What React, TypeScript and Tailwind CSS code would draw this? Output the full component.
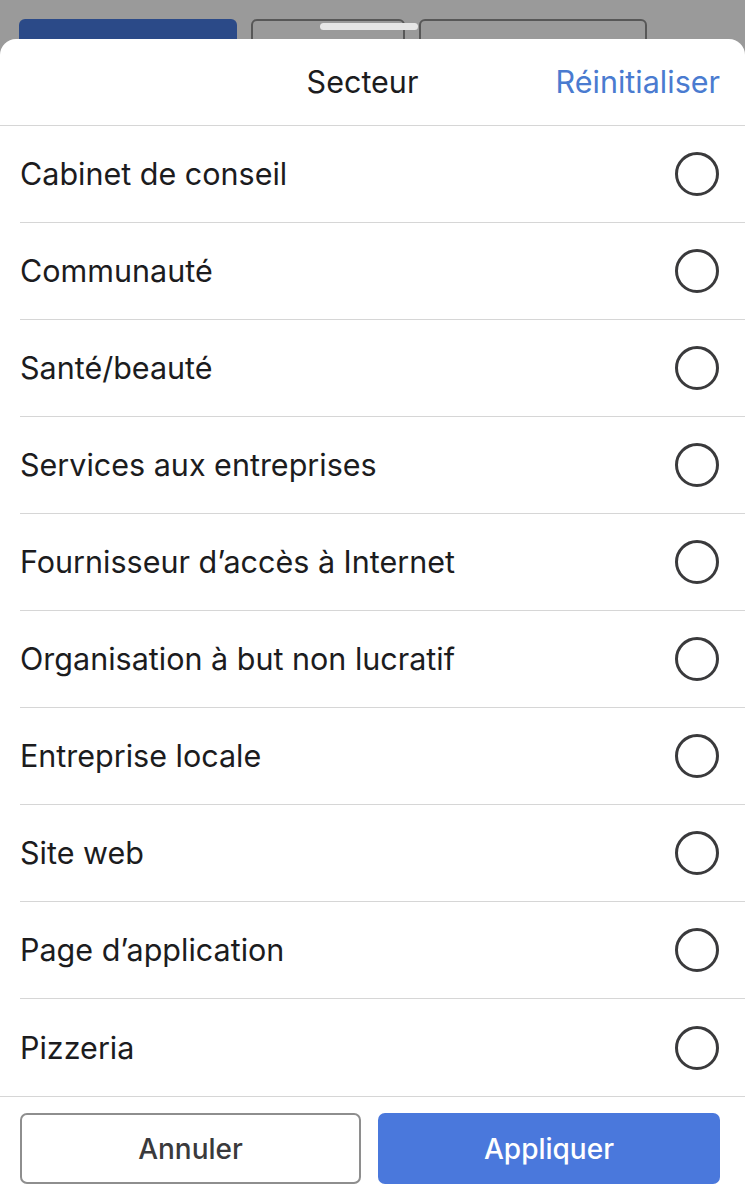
import { useState } from 'react'

const secteurs = [
  'Cabinet de conseil',
  'Communauté',
  'Santé/beauté',
  'Services aux entreprises',
  'Fournisseur d’accès à Internet',
  'Organisation à but non lucratif',
  'Entreprise locale',
  'Site web',
  'Page d’application',
  'Pizzeria',
]

export default function App() {
  const [selected, setSelected] = useState<string | null>(null)

  return (
    <div className="relative h-[1196px] w-[745px] overflow-hidden bg-[#9a9a9a] font-['Inter',sans-serif]">
      {/* Filtres en arrière-plan (assombris) */}
      <div className="flex gap-[14px] px-[19px] pt-[19px]">
        <div className="h-[40px] w-[218px] rounded-[6px] bg-[#2b4a88]" />
        <div className="h-[40px] w-[154px] rounded-[6px] border-2 border-[#575757]" />
        <div className="h-[40px] w-[228px] rounded-[6px] border-2 border-[#575757]" />
      </div>
      <div className="absolute left-[320px] top-[23px] h-[7px] w-[98px] rounded-full bg-[#e6e6e6]" />

      {/* Feuille */}
      <div className="absolute inset-x-0 bottom-0 top-[39px] flex flex-col rounded-t-[16px] bg-white">
        <div className="relative flex h-[87px] items-center justify-center border-b border-[#d6d6d6]">
          <span className="pr-[20px] text-[30.5px] text-[#1c1c1e]">Secteur</span>
          <button
            type="button"
            onClick={() => setSelected(null)}
            className="absolute right-[25px] text-[30.5px] text-[#4a7bd0]"
          >
            Réinitialiser
          </button>
        </div>

        <ul className="flex flex-col">
          {secteurs.map((s, i) => (
            <li
              key={s}
              onClick={() => setSelected(s)}
              className="flex h-[97px] items-center pl-[20px]"
            >
              <div
                className={`flex h-full flex-1 items-center justify-between pr-[26px] ${
                  i < secteurs.length - 1 ? 'border-b border-[#d6d6d6]' : ''
                }`}
              >
                <span className="text-[30.5px] text-[#1c1c1e]">{s}</span>
                <span
                  className={`flex h-[44px] w-[44px] items-center justify-center rounded-full border-[3px] ${
                    selected === s ? 'border-[#4a78dc]' : 'border-[#3a3a3c]'
                  }`}
                >
                  {selected === s && <span className="h-[24px] w-[24px] rounded-full bg-[#4a78dc]" />}
                </span>
              </div>
            </li>
          ))}
        </ul>

        <div className="flex gap-[17px] border-t border-[#d6d6d6] pl-[20px] pt-[16px]">
          <button
            type="button"
            className="h-[71px] w-[341px] rounded-[7px] border-2 border-[#8e8e8e] text-[28px] font-medium text-[#3a3a3c]"
          >
            Annuler
          </button>
          <button
            type="button"
            className="h-[71px] w-[342px] rounded-[7px] bg-[#4a78dc] text-[28px] font-medium text-white"
          >
            Appliquer
          </button>
        </div>
      </div>
    </div>
  )
}
